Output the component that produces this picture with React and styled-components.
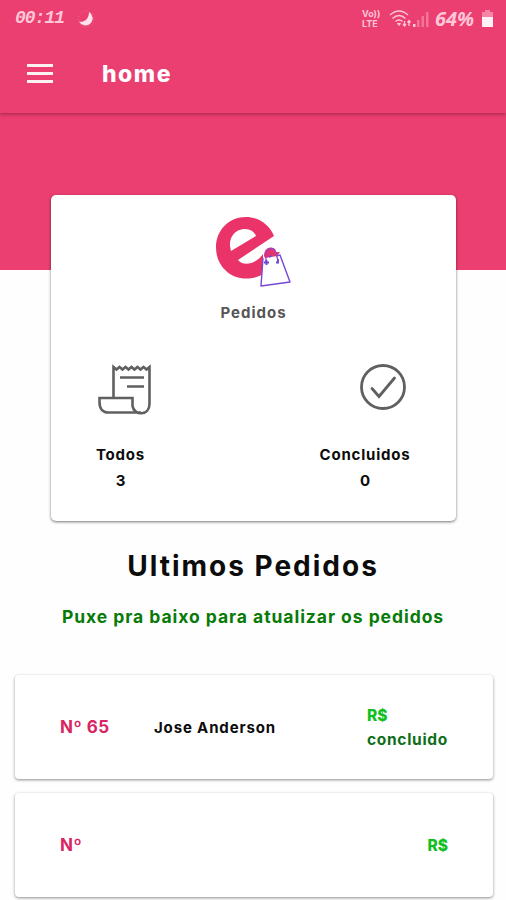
import React from "react";
import styled, { createGlobalStyle } from "styled-components";

const GlobalStyle = createGlobalStyle`
  * {
    box-sizing: border-box;
  }
  body {
    margin: 0;
    background: #fefefe;
    font-family: Inter, "Open Sans", sans-serif;
    color: #0c0c0c;
  }
`;

const Page = styled.div`
  height: 900px;
  overflow: hidden;
  display: flex;
  flex-direction: column;
`;

const Header = styled.header`
  position: relative;
  flex: none;
  height: 113px;
  background: #ea3f70;
  box-shadow: 0 1px 4px rgba(60, 0, 20, 0.45);
`;

const StatusBar = styled.div`
  height: 37px;
  padding: 0 12px 0 15px;
  display: flex;
  align-items: center;
  color: #ffc6d8;
`;

const Clock = styled.span`
  width: 62px;
  font: italic 700 18px/37px "Liberation Mono", monospace;
  letter-spacing: -1px;
`;

const StatusIcons = styled.div`
  margin-left: auto;
  display: flex;
  align-items: center;
`;

const Volte = styled.div`
  width: 27px;
  display: flex;
  flex-direction: column;
  font-size: 9px;
  font-weight: 700;
  line-height: 10px;
`;

const Percent = styled.span`
  width: 46px;
  margin-left: 5px;
  font: italic 700 20px/37px "Open Sans", sans-serif;
`;

const Toolbar = styled.div`
  height: 73px;
  padding-left: 27px;
  display: flex;
  align-items: center;
`;

const MenuButton = styled.button`
  width: 26px;
  height: 19px;
  padding: 0;
  border: 0;
  background: none;
  display: flex;
  flex-direction: column;
  justify-content: space-between;
  cursor: pointer;
`;

const MenuLine = styled.span`
  height: 3px;
  background: #fff0f5;
`;

const Title = styled.h1`
  margin: 0 0 0 49px;
  font-size: 23px;
  font-weight: 800;
  letter-spacing: 1.5px;
  color: #fff;
`;

const Hero = styled.div`
  flex: none;
  height: 157px;
  background: #ea3f70;
`;

const Summary = styled.section`
  flex: none;
  width: 405px;
  height: 326px;
  margin: -75px 0 0 51px;
  padding-top: 21px;
  border-radius: 5px;
  background: #fff;
  box-shadow: 0 1px 3px rgba(0, 0, 0, 0.55);
  z-index: 1;
  display: flex;
  flex-direction: column;
  align-items: center;
  gap: 10px;
`;

const Label = styled.span`
  font-size: 15px;
  font-weight: 700;
  line-height: 26px;
  letter-spacing: ${(p) => p.$spacing || 0}px;
  color: ${(p) => p.$color || "#0c0c0c"};
`;

const Counters = styled.div`
  width: 100%;
  margin-top: 28px;
  padding: 0 45px;
  display: flex;
  justify-content: space-between;
`;

const Counter = styled.div`
  width: ${(p) => p.$width}px;
  display: flex;
  flex-direction: column;
  align-items: center;
`;

const IconBox = styled.div`
  height: 78px;
  margin-left: ${(p) => p.$shift}px;
`;

const Heading = styled.h2`
  margin: 25px 0 0;
  text-align: center;
  font-size: 28px;
  font-weight: 700;
  line-height: 40px;
  letter-spacing: 2px;
`;

const Hint = styled.p`
  margin: 18px 0 0;
  text-align: center;
  font-size: 17.5px;
  font-weight: 700;
  line-height: 26px;
  letter-spacing: 0.95px;
  color: #087a08;
`;

const Orders = styled.div`
  margin-top: 45px;
  padding: 0 13px 0 15px;
  display: flex;
  flex-direction: column;
  gap: 14px;
`;

const Order = styled.article`
  height: 104px;
  padding: 0 45px;
  border-radius: 4px;
  background: #fff;
  box-shadow: 0 1px 3px rgba(0, 0, 0, 0.45);
  display: flex;
  align-items: center;
`;

const OrderNumber = styled.span`
  width: 94px;
  font-size: 17px;
  font-weight: 700;
  letter-spacing: 0.5px;
  color: #d92563;
`;

const Customer = styled.span`
  font-size: 15px;
  font-weight: 700;
  letter-spacing: 0.85px;
`;

const Amount = styled.div`
  margin-left: auto;
  padding-top: 2px;
  display: flex;
  flex-direction: column;
  font-size: 15.5px;
  font-weight: 800;
  line-height: 24px;
  color: #10c020;
`;

const OrderStatus = styled.span`
  font-weight: 700;
  letter-spacing: 0.7px;
  color: #0d6e18;
`;

const orders = [
  { number: "Nº 65", customer: "Jose Anderson", status: "concluido" },
  { number: "Nº", customer: "", status: "" },
];

function MoonIcon() {
  return (
    <svg width="18" height="18" viewBox="0 0 18 18">
      <path d="M12 2a7.2 7.2 0 1 1-10 9.5c5 1.5 10-2.5 10-9.500z" fill="#ffe3ec" />
      <circle cx="9" cy="9" r="8" fill="none" stroke="#ff9bb9" strokeDasharray="1 2" opacity=".5" />
    </svg>
  );
}

function WifiIcon() {
  return (
    <svg width="23" height="20" viewBox="0 0 23 20" fill="none" stroke="#ffc6d8" strokeWidth="1.6">
      <path d="M1 6q9-8 18 0M3.500 9.500q6.500-6 13 0M6.500 12.500q3.500-3 7 0" />
      <path d="M8.500 14.500h3L10 16.500z" fill="#ffc6d8" strokeWidth="1" />
      <path d="M15.500 12v5M14 15l1.500 2 1.500-2M20 17v-5M18.500 13.500l1.500-2 1.500 2" strokeWidth="1.300" />
    </svg>
  );
}

function SignalIcon() {
  return (
    <svg width="18" height="18" viewBox="0 0 18 18" fill="#ffc6d8">
      <path d="M1 14h2.500v3H1z" />
      <path d="M5 10h2.500v7H5zM9.500 6H12v11H9.500zM14 2h2.500v15H14z" opacity=".4" />
    </svg>
  );
}

function BatteryIcon() {
  return (
    <svg width="13" height="19" viewBox="0 0 13 19">
      <path d="M4 1h5v2h3v15H1V3h3z" fill="#f585a6" />
      <path d="M1 8h11v10H1z" fill="#fff0f5" />
    </svg>
  );
}

function Logo() {
  return (
    <svg width="77" height="74" viewBox="0 0 77 74">
      <path
        d="M59 20C54 8 43 1 31 1C14 1 1 14 1 31.500S14 62.500 31 62.500C38 62.500 43 61 48 58V38C43 46 30 52 23 44Z"
        fill="#ea3368"
      />
      <path d="M16 35C12 22 20 13 30 13Q38 13 41 20Z" fill="#fff" />
      <path d="M48 43L65 38L75 66L46 70Z" fill="#fff" />
      <path d="M49 40C49 30 59 29 61 36L65 36L62 40L50 42Z" fill="#e5336c" />
      <path d="M48 42L46 70L75 66L65 39L61 40M54 41L57 40" fill="none" stroke="#7548d8" strokeWidth="1.400" strokeLinejoin="round" />
      <path d="M51 46V39C52 30 60 31 61 37L63 45" fill="none" stroke="#9a43c8" strokeWidth="1.300" />
      <path d="M51.500 44v5M49 46.500h5M63 43v3.500h-2" fill="none" stroke="#6842d0" strokeWidth="1.800" />
    </svg>
  );
}

function ReceiptIcon() {
  return (
    <svg width="54" height="52" viewBox="0 0 54 52" fill="none" stroke="#606060" strokeWidth="2.600">
      <path d="M15.500 34V3l3 2.500 3-2.500 3 2.500 3-2.500 3 2.500 3-2.500 3 2.500 3-2.500 3 2.500 3-2.500 3 2.500 3-2.500V40C51.500 52 36 52 34.500 42V34H1.500V38C1.500 45 5 48.500 10 48.500H43" />
      <path d="M22 13.500h24M29 22.500h17" />
    </svg>
  );
}

function CheckIcon() {
  return (
    <svg width="46" height="46" viewBox="0 0 46 46" fill="none" stroke="#606060" strokeWidth="2.800">
      <circle cx="23" cy="23" r="21.500" />
      <path d="M12 24.500l7 8L34.500 14" strokeLinecap="round" />
    </svg>
  );
}

export default function App() {
  return (
    <Page>
      <GlobalStyle />
      <Header>
        <StatusBar>
          <Clock>00:11</Clock>
          <MoonIcon />
          <StatusIcons>
            <Volte>
              <span>Vo))</span>
              <span>LTE</span>
            </Volte>
            <WifiIcon />
            <SignalIcon />
            <Percent>64%</Percent>
            <BatteryIcon />
          </StatusIcons>
        </StatusBar>
        <Toolbar>
          <MenuButton aria-label="Menu">
            <MenuLine />
            <MenuLine />
            <MenuLine />
          </MenuButton>
          <Title>home</Title>
        </Toolbar>
      </Header>
      <Hero />
      <Summary>
        <Logo />
        <Label $color="#565656" $spacing={1}>
          Pedidos
        </Label>
        <Counters>
          <Counter $width={49}>
            <IconBox $shift={9}>
              <ReceiptIcon />
            </IconBox>
            <Label $spacing={0.8}>Todos</Label>
            <Label>3</Label>
          </Counter>
          <Counter $width={92}>
            <IconBox $shift={35}>
              <CheckIcon />
            </IconBox>
            <Label $spacing={0.8}>Concluidos</Label>
            <Label>0</Label>
          </Counter>
        </Counters>
      </Summary>
      <Heading>Ultimos Pedidos</Heading>
      <Hint>Puxe pra baixo para atualizar os pedidos</Hint>
      <Orders>
        {orders.map((order) => (
          <Order key={order.number}>
            <OrderNumber>{order.number}</OrderNumber>
            <Customer>{order.customer}</Customer>
            <Amount>
              R$
              {order.status && <OrderStatus>{order.status}</OrderStatus>}
            </Amount>
          </Order>
        ))}
      </Orders>
    </Page>
  );
}
